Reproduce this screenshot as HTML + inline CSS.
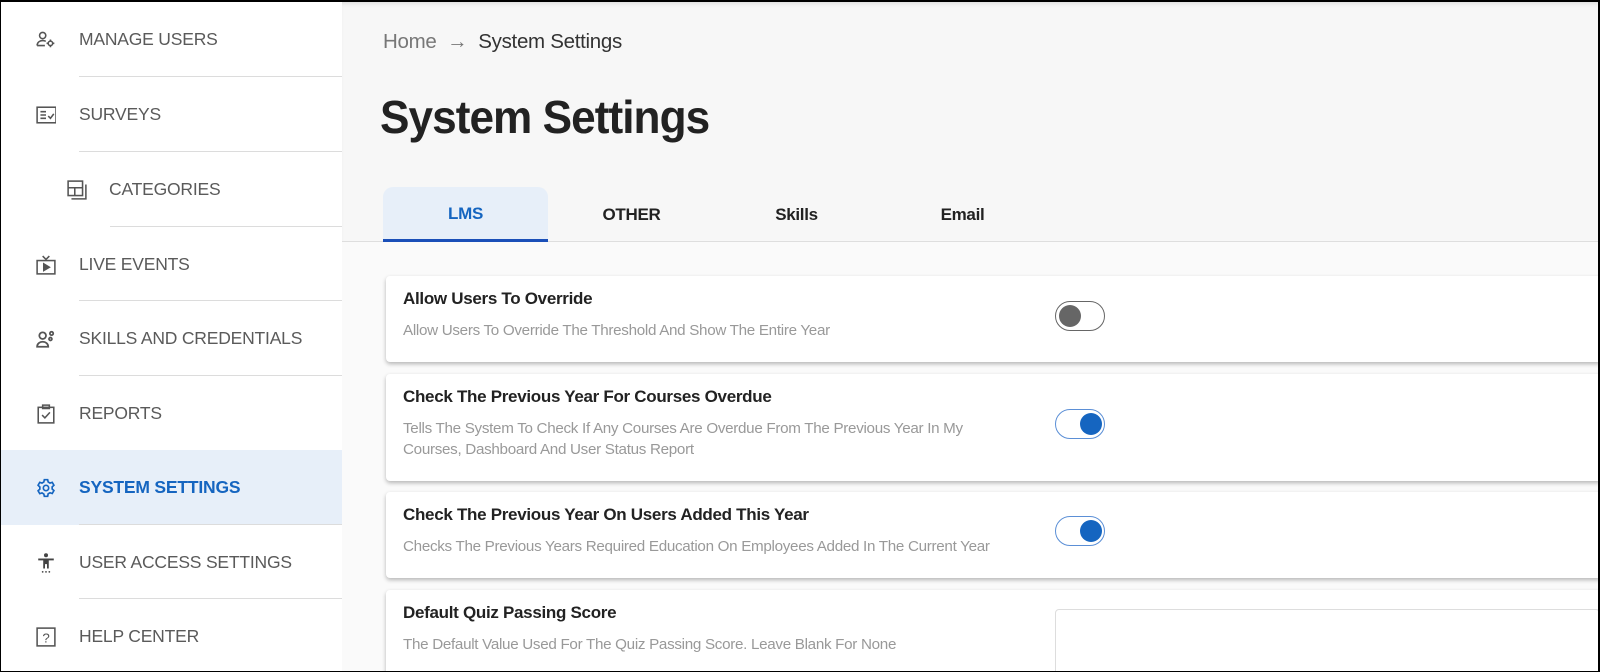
<!DOCTYPE html>
<html><head><meta charset="utf-8"><style>
*{box-sizing:border-box;margin:0;padding:0}
html,body{width:1600px;height:672px;overflow:hidden}
body{font-family:"Liberation Sans",sans-serif;background:#fff;position:relative}
.frame{position:absolute;left:0;top:0;width:1600px;height:672px;border:1px solid #000;border-top:2px solid #000;border-right:2px solid #000;z-index:10;pointer-events:none}
.side{position:absolute;left:0;top:0;width:342px;height:672px;background:#fff}
.item{position:absolute;left:0;width:342px;height:75px;display:flex;align-items:center;color:#5a5a5a;font-size:17.5px;letter-spacing:-0.2px}
.item .ic{position:absolute;left:36px;top:28px;width:20px;height:20px}
.item span{position:absolute;left:79px}
.item.sub .ic{left:67px}.item.sub span{left:109px}
.item.sel{background:#e7eff9;color:#1565c0;font-weight:bold}
.div{position:absolute;left:79px;right:0;height:1px;background:#dcdcdc}
.main{position:absolute;left:342px;top:0;right:0;height:672px;background:#fafafa;overflow:hidden}
.head{position:absolute;left:0;top:0;right:0;height:242px;background:#f7f7f7;border-bottom:1px solid #dedede;box-shadow:inset 0 6px 6px -4px #ccc}
.bc{position:absolute;left:41px;top:30px;font-size:20.5px;color:#777;letter-spacing:-0.3px}
.bc b{font-weight:normal;color:#333}
h1{position:absolute;left:38px;top:90px;font-size:46px;font-weight:bold;color:#222;letter-spacing:-1px;transform:scaleX(0.96);transform-origin:left}
.tab{position:absolute;top:187px;height:55px;width:165px;text-align:center;line-height:56px;font-size:17px;color:#222;font-weight:bold;letter-spacing:-0.3px}
.tab.on{background:#e7eff9;color:#1565c0;border-radius:10px 10px 0 0;border-bottom:3px solid #1a4fb8;line-height:54px}
.card{position:absolute;left:44px;right:0;background:#fff;border-radius:4px 0 0 4px;box-shadow:0 2px 4px rgba(0,0,0,.28)}
.card .t{position:absolute;left:17px;top:13px;font-size:17px;font-weight:bold;color:#222;letter-spacing:-0.3px}
.card .d{position:absolute;left:17px;top:44px;font-size:15.2px;color:#999;line-height:21px;width:600px;letter-spacing:-0.3px}
.tg{position:absolute;left:669px;width:50px;height:30px;border-radius:15px;border:1px solid #666;background:#fff}
.tg i{position:absolute;top:3px;left:3px;width:22px;height:22px;border-radius:50%;background:#666}
.tg.on{border-color:#5b8fd6}
.tg.on i{left:24px;background:#1565c0}
</style></head><body>
<div class="side">
 <div class="item" style="top:2px"><svg class="ic" viewBox="0 0 18 18" fill="none" stroke="#555" stroke-width="1.4"><circle cx="6" cy="5" r="2.8"/><path d="M1 14c0-3 2.5-4.5 5-4.5 1.2 0 2 .3 2.8.7M1 14h7"/><circle cx="13" cy="12" r="2"/><path d="M13 8.5v1.5M13 14v1.5M9.5 12H11M15 12h1.5"/></svg><span>MANAGE USERS</span></div>
 <div class="div" style="top:76px"></div>
 <div class="item" style="top:77px"><svg class="ic" viewBox="0 0 18 18" fill="none" stroke="#555" stroke-width="1.4"><rect x="1" y="2" width="17" height="14"/><path d="M4 6h5M4 9h5M4 12h5M11 10l2 2 3-4"/></svg><span>SURVEYS</span></div>
 <div class="div" style="top:151px"></div>
 <div class="item sub" style="top:152px"><svg class="ic" viewBox="0 0 18 18" fill="none" stroke="#555" stroke-width="1.4"><rect x="1" y="1" width="13" height="13"/><path d="M1 7h13M7 7v7M17 4v13H4"/></svg><span>CATEGORIES</span></div>
 <div class="div" style="top:226px;left:110px"></div>
 <div class="item" style="top:227px"><svg class="ic" viewBox="0 0 18 18" fill="none" stroke="#555" stroke-width="1.4"><rect x="1" y="5" width="16" height="12"/><path d="M6 1l3 3 3-3"/><path d="M7 8v6l5-3z" fill="#555"/></svg><span>LIVE EVENTS</span></div>
 <div class="div" style="top:300px"></div>
 <div class="item" style="top:301px"><svg class="ic" viewBox="0 0 18 18" fill="none" stroke="#555" stroke-width="1.6"><circle cx="6" cy="6" r="3"/><path d="M1 16c0-3 2.5-4.5 5-4.5s5 1.5 5 4.5z"/><circle cx="14" cy="4" r="1.5"/><circle cx="13" cy="9" r="1.3"/></svg><span>SKILLS AND CREDENTIALS</span></div>
 <div class="div" style="top:375px"></div>
 <div class="item" style="top:376px"><svg class="ic" viewBox="0 0 18 18" fill="none" stroke="#555" stroke-width="1.4"><rect x="2" y="3" width="14" height="14"/><path d="M6 1h6v3H6zM5.5 10l2.5 2.5 4.5-5"/></svg><span>REPORTS</span></div>
 <div class="item sel" style="top:450px"><svg class="ic" viewBox="0 0 24 24" fill="none" stroke="#1565c0" stroke-width="2"><circle cx="12" cy="12" r="3.2"/><path d="M10 2h4l.6 2.8 2.2 1.3 2.7-.9 2 3.5-2.1 1.9v2.6l2.1 1.9-2 3.5-2.7-.9-2.2 1.3L14 22h-4l-.6-2.8-2.2-1.3-2.7.9-2-3.5 2.1-1.9v-2.6L2.5 8.7l2-3.5 2.7.9 2.2-1.3z"/></svg><span>SYSTEM SETTINGS</span></div>
 <div class="div" style="top:524px"></div>
 <div class="item" style="top:525px"><svg class="ic" viewBox="0 0 18 18" fill="#444"><circle cx="9" cy="2" r="1.8"/><path d="M2 5h14v1.6h-4.5V14h-1.6v-4H8.1v4H6.5V6.6H2z"/><circle cx="6" cy="17" r=".8"/><circle cx="9" cy="17" r=".8"/><circle cx="12" cy="17" r=".8"/></svg><span>USER ACCESS SETTINGS</span></div>
 <div class="div" style="top:598px"></div>
 <div class="item" style="top:599px"><svg class="ic" viewBox="0 0 18 18" fill="none" stroke="#555" stroke-width="1.4"><rect x="1" y="1" width="16" height="16"/><text x="9" y="14" font-size="12" text-anchor="middle" fill="#555" stroke="none" font-family="Liberation Sans">?</text></svg><span>HELP CENTER</span></div>
</div>
<div class="main">
 <div class="head">
  <div class="bc">Home &nbsp;→&nbsp; <b>System Settings</b></div>
  <h1>System Settings</h1>
  <div class="tab on" style="left:41px">LMS</div>
  <div class="tab" style="left:207px">OTHER</div>
  <div class="tab" style="left:372px">Skills</div>
  <div class="tab" style="left:538px">Email</div>
 </div>
 <div class="card" style="top:276px;height:86px"><div class="t">Allow Users To Override</div><div class="d">Allow Users To Override The Threshold And Show The Entire Year</div><div class="tg" style="top:25px"><i></i></div></div>
 <div class="card" style="top:374px;height:107px"><div class="t">Check The Previous Year For Courses Overdue</div><div class="d">Tells The System To Check If Any Courses Are Overdue From The Previous Year In My Courses, Dashboard And User Status Report</div><div class="tg on" style="top:35px"><i></i></div></div>
 <div class="card" style="top:492px;height:86px"><div class="t">Check The Previous Year On Users Added This Year</div><div class="d" style="width:680px">Checks The Previous Years Required Education On Employees Added In The Current Year</div><div class="tg on" style="top:24px"><i></i></div></div>
 <div class="card" style="top:590px;height:100px"><div class="t">Default Quiz Passing Score</div><div class="d">The Default Value Used For The Quiz Passing Score. Leave Blank For None</div><div style="position:absolute;left:669px;top:19px;right:0;height:70px;border:1px solid #ddd;border-radius:4px"></div></div>
</div>
<div class="frame"></div>
</body></html>
